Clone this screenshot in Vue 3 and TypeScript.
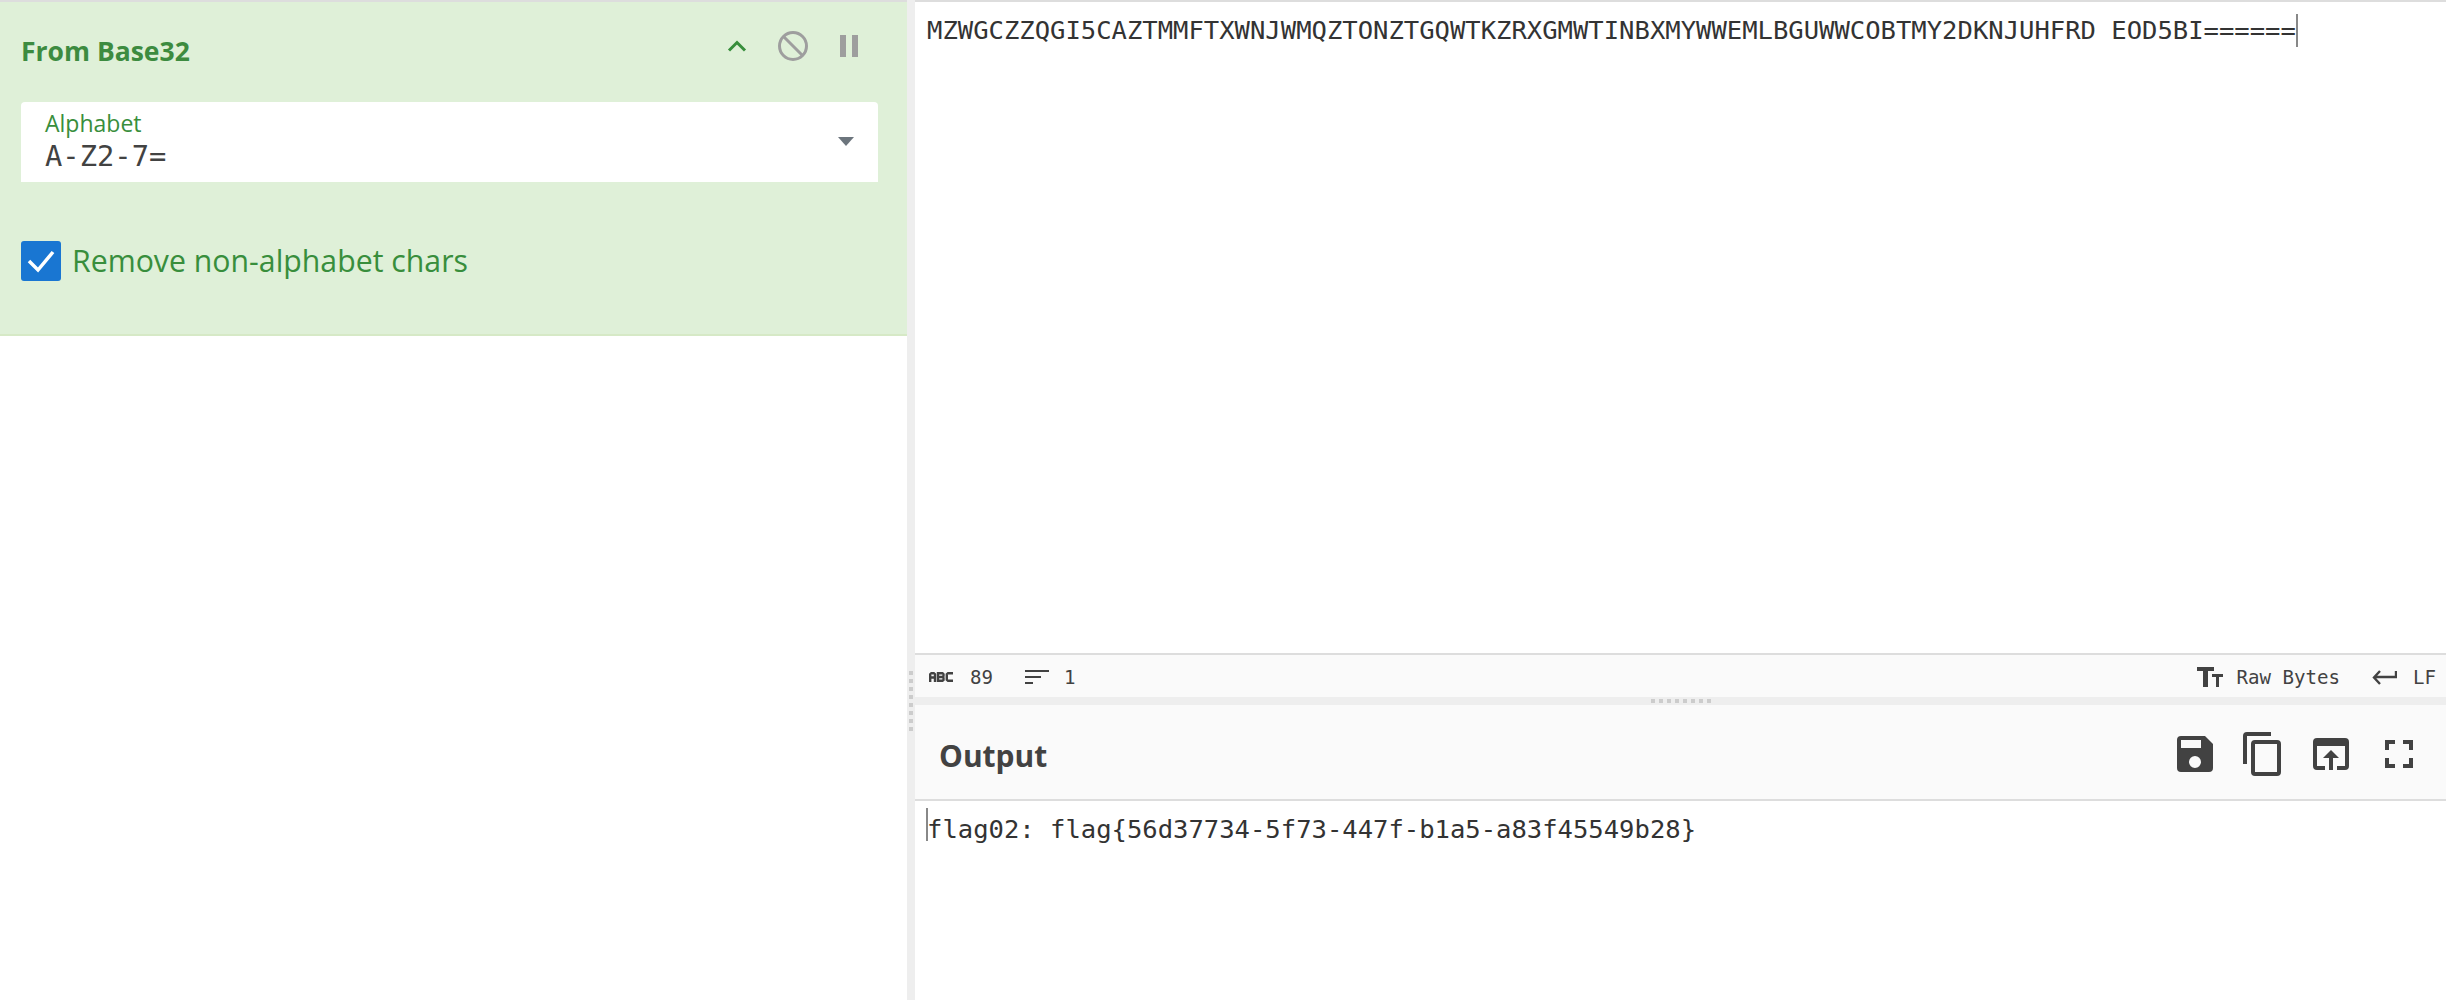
<script setup lang="ts">
const inputText = 'MZWGCZZQGI5CAZTMMFTXWNJWMQZTONZTGQWTKZRXGMWTINBXMYWWEMLBGUWWCOBTMY2DKNJUHFRD EOD5BI======'
const outputText = 'flag02: flag{56d37734-5f73-447f-b1a5-a83f45549b28}'
const dots = [0, 1, 2, 3, 4, 5, 6, 7]
</script>

<template>
  <div class="app">
    <section class="recipe">
      <div class="op">
        <div class="op-head">
          <h1 class="op-title">From Base32</h1>
          <div class="op-tools">
            <svg width="32" height="32" viewBox="0 0 32 32"><path d="M8 20.500 16 12.500l8 8" fill="none" stroke="#388e3c" stroke-width="3" /></svg>
            <svg width="32" height="32" viewBox="0 0 32 32"><circle cx="16" cy="16" r="13.500" fill="none" stroke="#9e9e9e" stroke-width="3" /><path d="M6.500 6.500 25.500 25.500" stroke="#9e9e9e" stroke-width="3" /></svg>
            <svg width="32" height="32" viewBox="0 0 32 32"><path d="M7 5h6v22H7zM19 5h6v22h-6z" fill="#9e9e9e" /></svg>
          </div>
        </div>
        <div class="select">
          <span class="select-label">Alphabet</span>
          <span class="select-value mono">A-Z2-7=</span>
          <i class="caret"></i>
        </div>
        <label class="check">
          <span class="box">
            <svg width="40" height="40" viewBox="0 0 40 40"><path d="M8 20 17 29 32 11" fill="none" stroke="#fff" stroke-width="3.500" /></svg>
          </span>
          <span>Remove non-alphabet chars</span>
        </label>
      </div>
    </section>
    <div class="v-gutter">
      <span v-for="d in dots" :key="d"></span>
    </div>
    <main class="io">
      <div class="input">
        <div class="mono text">{{ inputText }}<i class="cursor end"></i></div>
      </div>
      <div class="status">
        <div class="status-group">
          <svg width="24" height="10" viewBox="0 0 24 10" fill="none" stroke="#424242" stroke-width="2.400"><path d="M1.200 10V2.200L2.400 1.200h2.400L6 2.200V10M1.200 5.500H6M9 1.200h4.500l1 1V4l-1 1H9zM9 5h4.500l1 1v2l-1 .8H9zM9 1.200V8.800M24 1.200h-5l-1.200 1v5.600l1.200 1h5" /></svg>
          <span class="mono small">89</span>
          <svg class="lines" width="24" height="16" viewBox="0 0 24 16"><path d="M0 1h24v2H0zM0 7h16v2H0zM0 13h8v2H0z" fill="#424242" /></svg>
          <span class="mono small one">1</span>
        </div>
        <div class="status-group right">
          <svg class="tt" width="26" height="20" viewBox="0 0 26 20"><path d="M0 0h17v4h-6v16H6V4H0zM15 7h11v3h-4v10h-3V10h-4z" fill="#424242" /></svg>
          <span class="mono small">Raw Bytes</span>
          <svg class="ret" width="25" height="15" viewBox="0 0 25 15" fill="none" stroke="#424242" stroke-width="2.400"><path d="M24 1v6H2M8 1 2 7.500 8 14" /></svg>
          <span class="mono small">LF</span>
        </div>
      </div>
      <div class="h-gutter">
        <span v-for="d in dots" :key="d"></span>
      </div>
      <header class="output-head">
        <h2 class="output-title">Output</h2>
        <div class="output-tools">
          <svg width="48" height="48" viewBox="0 0 24 24"><path d="M17 3H5a2 2 0 0 0-2 2v14a2 2 0 0 0 2 2h14a2 2 0 0 0 2-2V7zm-5 16a3 3 0 1 1 0-6 3 3 0 0 1 0 6zm3-10H5V5h10z" fill="#424242" /></svg>
          <svg width="48" height="48" viewBox="0 0 24 24"><path d="M16 1H4a2 2 0 0 0-2 2v14h2V3h12zm3 4H8a2 2 0 0 0-2 2v14a2 2 0 0 0 2 2h11a2 2 0 0 0 2-2V7a2 2 0 0 0-2-2zm0 16H8V7h11z" fill="#424242" /></svg>
          <svg width="48" height="48" viewBox="0 0 24 24"><path d="M19 4H5a2 2 0 0 0-2 2v12a2 2 0 0 0 2 2h4v-2H5V8h14v10h-4v2h4a2 2 0 0 0 2-2V6a2 2 0 0 0-2-2zm-7 6-4 4h3v6h2v-6h3z" fill="#424242" /></svg>
          <svg width="48" height="48" viewBox="0 0 24 24"><path d="M7 14H5v5h5v-2H7zM5 10h2V7h3V5H5zm12 7h-3v2h5v-5h-2zM14 5v2h3v3h2V5z" fill="#424242" /></svg>
        </div>
      </header>
      <div class="output">
        <div class="mono text"><i class="cursor start"></i>{{ outputText }}</div>
      </div>
    </main>
  </div>
</template>

<style>
html, body { margin: 0; background: #fff; overflow: hidden; }
</style>

<style scoped>
.app {
  display: flex;
  width: 2446px;
  height: 1000px;
  overflow: hidden;
  font-family: "Open Sans", "Noto Sans", sans-serif;
  color: #424242;
}
.recipe { width: 907px; flex: none; }
.op {
  height: 336px;
  box-sizing: border-box;
  background: #dff0d8;
  border-top: 2px solid #ddd;
  border-bottom: 2px solid #d6e9c6;
  padding: 0 29px 0 21px;
}
.op-head {
  display: flex;
  justify-content: space-between;
  align-items: center;
  height: 96px;
  margin-bottom: 4px;
}
.op-title { margin: 1px 0 0; font-size: 26.500px; font-weight: 700; color: #3d8b40; }
.op-tools { display: flex; align-items: center; gap: 24px; margin: 0 13px 8px 0; }
.select {
  position: relative;
  height: 80px;
  box-sizing: border-box;
  padding: 7px 24px;
  background: #fff;
  border-radius: 4px 4px 0 0;
  display: flex;
  flex-direction: column;
}
.select-label { font-size: 23px; line-height: 29px; color: #388e3c; }
.select-value { font-size: 28.800px; line-height: 36px; color: #424242; }
.caret {
  position: absolute;
  right: 24px;
  top: 35px;
  border: 8px solid transparent;
  border-top: 9px solid #6c757d;
  border-bottom: 0;
}
.check {
  display: flex;
  align-items: center;
  gap: 11px;
  margin-top: 58px;
  font-size: 30.250px;
  color: #388e3c;
}
.box {
  width: 40px;
  height: 40px;
  background: #1976d2;
  border-radius: 3px;
  display: flex;
}
.v-gutter {
  width: 8px;
  flex: none;
  background: #eee;
  display: flex;
  flex-direction: column;
  align-items: center;
  gap: 4px;
  padding-top: 671px;
  box-sizing: border-box;
}
.v-gutter span, .h-gutter span { width: 4px; height: 4px; background: #ccc; display: block; flex: none; }
.io { flex: 1; min-width: 0; display: flex; flex-direction: column; border-top: 2px solid #ddd; }
.mono { font-family: "DejaVu Sans Mono", "Liberation Mono", monospace; }
.input { height: 651px; }
.text {
  position: relative;
  font-size: 25.560px;
  line-height: 38px;
  padding: 9px 12px;
  color: #333;
  white-space: pre;
}
.cursor { position: absolute; width: 2px; height: 33px; background: #888; top: 12px; }
.cursor.start { left: 11px; top: 7px; }
.status {
  height: 44px;
  box-sizing: border-box;
  background: #fafafa;
  border-top: 2px solid #ddd;
  display: flex;
  justify-content: space-between;
  align-items: center;
  padding: 2px 10px 0 14px;
}
.status-group { display: flex; align-items: center; gap: 17px; }
.status-group .lines { margin-left: 15px; }
.status-group .one { margin-left: -2px; }
.status-group.right { gap: 16px; }
.status-group .tt { margin-right: -2px; }
.status-group .ret { margin-left: 16px; }
.small { font-size: 19.100px; color: #424242; }
.h-gutter {
  height: 8px;
  flex: none;
  background: #eee;
  display: flex;
  justify-content: center;
  align-items: center;
  gap: 4px;
}
.output-head {
  height: 96px;
  box-sizing: border-box;
  background: #fafafa;
  border-bottom: 2px solid #ddd;
  display: flex;
  justify-content: space-between;
  align-items: center;
  padding: 4px 23px 0 24px;
}
.output-title { margin: 2px 0 0; font-size: 30px; font-weight: 700; color: #424242; }
.output-tools { display: flex; gap: 20px; }
.output { flex: 1; }
</style>
